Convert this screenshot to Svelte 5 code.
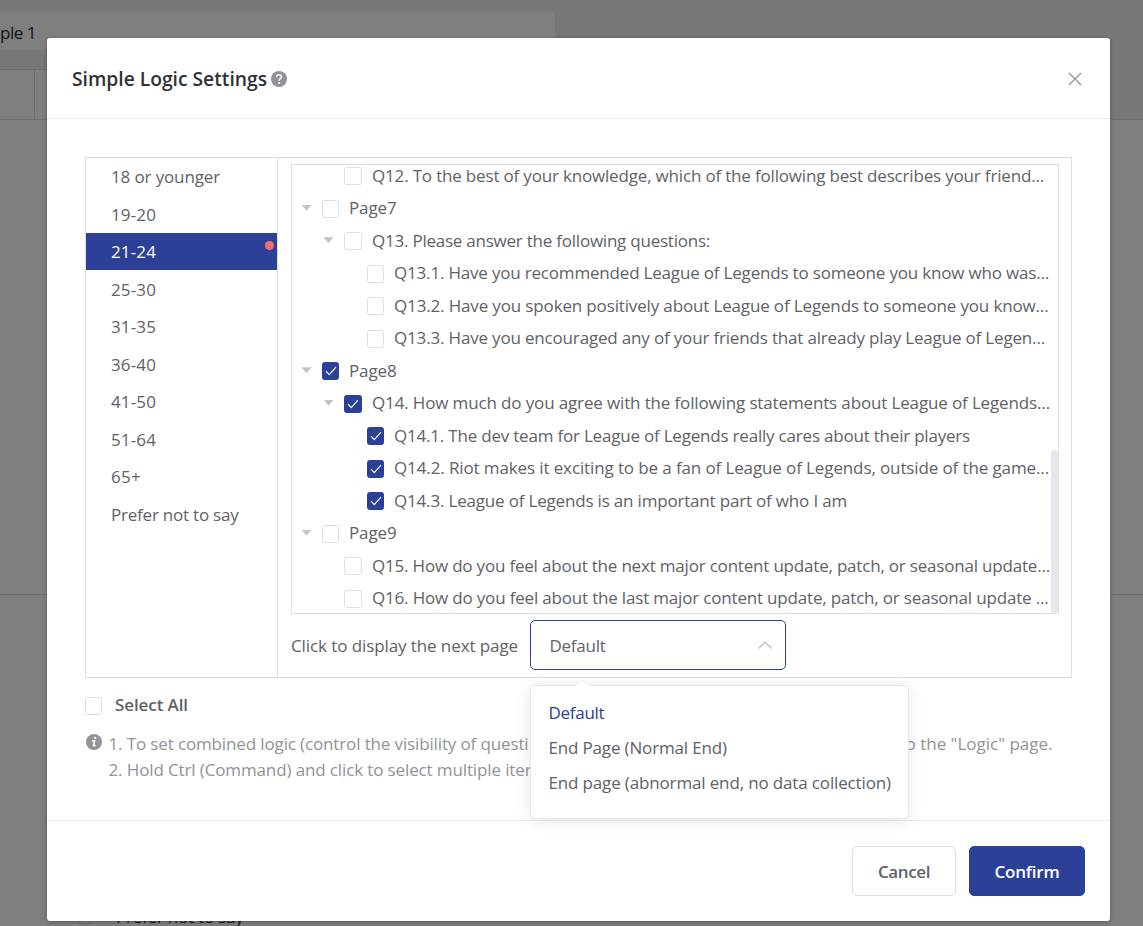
<script>
  const ages = [
    ['18 or younger', 109], ['19-20', 45], ['21-24', 45], ['25-30', 45], ['31-35', 45],
    ['36-40', 45], ['41-50', 45], ['51-64', 45], ['65+', 30], ['Prefer not to say', 127.5]
  ];
  const active = '21-24';

  const rows = [
    { level: 1, text: 'Q12. To the best of your knowledge, which of the following best describes your friend...', w: 672 },
    { level: 0, open: true, text: 'Page7', w: 47.5 },
    { level: 1, open: true, text: 'Q13. Please answer the following questions:', w: 338 },
    { level: 2, text: 'Q13.1. Have you recommended League of Legends to someone you know who was...', w: 655 },
    { level: 2, text: 'Q13.2. Have you spoken positively about League of Legends to someone you know...', w: 654.5 },
    { level: 2, text: 'Q13.3. Have you encouraged any of your friends that already play League of Legen...', w: 651 },
    { level: 0, open: true, checked: true, text: 'Page8', w: 47.5 },
    { level: 1, open: true, checked: true, text: 'Q14. How much do you agree with the following statements about League of Legends...', w: 678 },
    { level: 2, checked: true, text: 'Q14.1. The dev team for League of Legends really cares about their players', w: 576 },
    { level: 2, checked: true, text: 'Q14.2. Riot makes it exciting to be a fan of League of Legends, outside of the game...', w: 655 },
    { level: 2, checked: true, text: 'Q14.3. League of Legends is an important part of who I am', w: 453 },
    { level: 0, open: true, text: 'Page9', w: 47.5 },
    { level: 1, text: 'Q15. How do you feel about the next major content update, patch, or seasonal update...', w: 678 },
    { level: 1, text: 'Q16. How do you feel about the last major content update, patch, or seasonal update ...', w: 676.5 }
  ];

  const options = [['Default', 56], ['End Page (Normal End)', 178.5], ['End page (abnormal end, no data collection)', 342.5]];

  // Tracks a label so that it fills the given width.
  function fit(node, width) {
    const natural = node.getBoundingClientRect().width;
    node.style.letterSpacing = (width - natural) / node.textContent.length + 'px';
  }
</script>

{#snippet box(checked)}
  <span class="check" class:on={checked}>
    {#if checked}
      <svg viewBox="0 0 18 18" width="18" height="18"><path d="M4 9.2 7.3 12.6 14 5.2" fill="none" stroke="#fff" stroke-width="1.2" /></svg>
    {/if}
  </span>
{/snippet}

<div class="page">
  <div class="strip"><div class="tab"><span use:fit={36}>ple 1</span></div></div>
  <div class="toolbar"><i></i></div>
  <div class="section"></div>
  <div class="rest"><div class="radio-row"><i></i><span use:fit={127.5}>Prefer not to say</span></div></div>
</div>

<div class="modal">
  <header>
    <h1><span use:fit={195}>Simple Logic Settings</span></h1>
    <svg class="help" viewBox="0 0 16 16" width="16" height="16">
      <circle cx="8" cy="8" r="8" fill="#909399" />
      <path d="M5.6 6.2C5.6 4.6 6.6 3.8 8 3.8s2.4.9 2.4 2.1C10.4 7.5 8 7.7 8 9.7" fill="none" stroke="#fff" stroke-width="1.5" />
      <circle cx="8" cy="12" r="1" fill="#fff" />
    </svg>
    <svg class="close" viewBox="0 0 14 14" width="14" height="14"><path d="M1 1 13 13M13 1 1 13" stroke="#909399" stroke-width="1.3" /></svg>
  </header>

  <main>
    <div class="panel">
      <ul class="ages">
        {#each ages as [label, w]}
          <li class:active={label === active}><span use:fit={w}>{label}</span>{#if label === active}<i></i>{/if}</li>
        {/each}
      </ul>
      <div class="right">
        <div class="tree">
          <div class="rows">
            {#each rows as r}
              <div class="row l{r.level}">
                <span class="caret">{#if r.open}<i></i>{/if}</span>
                {@render box(r.checked)}
                <span class="label" use:fit={r.w}>{r.text}</span>
              </div>
            {/each}
          </div>
          <div class="thumb"></div>
        </div>
        <div class="next">
          <span class="caption" use:fit={227}>Click to display the next page</span>
          <div class="select">
            <span use:fit={56}>Default</span>
            <svg viewBox="0 0 16 10" width="16" height="10"><path d="M1.5 8.5 8 2 14.5 8.5" fill="none" stroke="#c0c4cc" stroke-width="1.4" /></svg>
            <div class="menu">
              <svg class="arrow" viewBox="0 0 16 8" width="16" height="8"><path d="M0 8 8 1 16 8Z" fill="#fff" /><path d="M1 7 8 1 15 7" fill="none" stroke="#eef0f5" /></svg>
              {#each options as [label, w], i}
                <div class="option" class:picked={i === 0}><span use:fit={w}>{label}</span></div>
              {/each}
            </div>
          </div>
        </div>
      </div>
    </div>

    <div class="all">{@render box(false)}<b><span use:fit={73}>Select All</span></b></div>

    <div class="notes">
      <svg viewBox="0 0 16 16" width="16" height="16">
        <circle cx="8" cy="8" r="8" fill="#909399" />
        <circle cx="9.1" cy="4" r="1.25" fill="#fff" />
        <path d="M6 6.7H8.6L7.4 11.5Q7.4 12.3 9.6 11.2" fill="none" stroke="#fff" stroke-width="1.6" />
      </svg>
      <div class="lines">
        <p><span use:fit={420}>1. To set combined logic (control the visibility of questi</span><span use:fit={147}>o the "Logic" page.</span></p>
        <p><span use:fit={423}>2. Hold Ctrl (Command) and click to select multiple iter</span></p>
      </div>
    </div>
  </main>

  <footer>
    <button><span use:fit={52}>Cancel</span></button>
    <button class="primary"><span use:fit={65}>Confirm</span></button>
  </footer>
</div>

<style>
  :global(body) { overflow: hidden; }
  .page, .modal { font-family: 'Open Sans', 'Noto Sans', sans-serif; font-size: 17px; color: #606266; box-sizing: border-box; }
  .page *, .modal * { box-sizing: border-box; }
  span { white-space: pre; }
  .page { height: 926px; background: #7f7f7f; overflow: hidden; display: flex; flex-direction: column; }
  .strip { height: 69px; background: #777; padding-top: 12px; flex: none; }
  .tab { width: 555px; height: 38px; background: #7f7f7f; line-height: 41px; color: #101218; }
  .toolbar { height: 51px; flex: none; border-bottom: 1px solid #6d6e70; background: linear-gradient(90deg, #7f7f7f 1100px, #777 1100px); }
  .toolbar::before { content: ''; display: block; width: 1100px; height: 1px; background: #6d6e70; }
  .toolbar i { display: block; width: 35px; height: 49px; border-right: 1px solid #6d6e70; }
  .section { height: 475px; flex: none; border-bottom: 1px solid #6d6e70; }
  .rest { flex: 1; display: flex; align-items: flex-end; padding-left: 76px; }
  .radio-row { display: flex; align-items: center; gap: 22px; height: 24px; color: #101218; margin-bottom: -2px; }
  .radio-row i { width: 18px; height: 18px; border: 1px solid #6d6e70; border-radius: 50%; }
  .modal { position: absolute; left: 47px; top: 38px; width: 1063px; height: 883px; background: #fff; border-radius: 3px; box-shadow: 0 1px 4px rgba(0,0,0,.3); display: flex; flex-direction: column; }
  header { height: 81px; flex: none; border-bottom: 1px solid #e4e7ed; display: flex; align-items: center; padding: 2px 28px 0 25px; }
  h1 { margin: 0; font-size: 19.3px; font-weight: 600; color: #303133; line-height: 26px; }
  .help { margin-left: 3.5px; }
  .close { margin-left: auto; }
  main { flex: 1; padding: 38px 38px 0; min-height: 0; }
  .panel { height: 521px; width: 987px; border: 1px solid #dcdfe6; display: flex; }
  .ages { list-style: none; margin: 0; padding: 0; width: 192px; border-right: 1px solid #dcdfe6; flex: none; }
  .ages li { height: 37.5px; line-height: 38.5px; padding-left: 25px; position: relative; }
  .ages li.active { background: linear-gradient(#2c4097 37px, transparent 37px); color: #fff; }
  .ages i { position: absolute; right: 3.5px; top: 7.5px; width: 9px; height: 9px; border-radius: 50%; background: #f56c6c; }
  .right { flex: 1; padding: 6px 12px 0 13px; min-width: 0; }
  .tree { height: 450px; width: 768px; border: 1px solid #dcdfe6; overflow: hidden; position: relative; }
  .rows { margin-top: -5px; }
  .row { height: 32.5px; display: flex; align-items: center; padding-left: 8px; }
  .l1 { padding-left: 30px; }
  .l2 { padding-left: 53px; }
  .caret { width: 22px; flex: none; padding-left: 1.5px; }
  .caret i { display: block; width: 10px; height: 6px; margin-top: -2px; background: #c0c4cc; clip-path: polygon(0 0, 100% 0, 50% 100%); }
  .check { width: 17px; height: 18px; flex: none; border: 1px solid #dcdfe6; border-radius: 2.5px; background: #fff; display: block; }
  .l1 .check { width: 18px; }
  .check.on { background: #2c4097; border-color: #2c4097; }
  .check svg { display: block; margin: -1px; }
  .label { margin-left: 10px; line-height: 30px; margin-top: -1.5px; flex: none; }
  .thumb { position: absolute; right: 0; bottom: 0; width: 7px; height: 163px; border-radius: 4px; background: #e4e7ec; }
  .next { display: flex; align-items: center; gap: 12px; margin-top: 6px; height: 50px; }
  .caption { padding-top: 1px; }
  .select { position: relative; width: 256px; height: 50px; border: 1px solid #2c4097; border-radius: 5px; display: flex; align-items: center; justify-content: space-between; padding: 0 12px 0 18.5px; }
  .menu { position: absolute; z-index: 2; left: -1px; top: 64px; width: 379px; height: 134px; background: #fff; border: 1px solid #e4e7ed; border-radius: 4px; box-shadow: 0 2px 15px rgba(0,0,0,.1); padding-top: 9px; }
  .arrow { position: absolute; top: -7px; left: 43px; }
  .option { height: 35px; line-height: 36px; padding-left: 17.4px; }
  .picked { color: #2c4097; }
  .all { display: flex; align-items: center; height: 26px; margin-top: 14px; padding-top: 1px; }
  .all b { font-weight: 600; margin-left: 13px; margin-top: -2px; }
  .notes { display: flex; margin-top: 12px; color: #909399; }
  .notes > svg { margin: 3.5px 7px 0 .5px; }
  .lines { width: 944px; }
  p { margin: 0; height: 26.25px; line-height: 27px; display: flex; justify-content: space-between; }
  footer { height: 101px; flex: none; border-top: 1px solid #ebeef5; display: flex; justify-content: flex-end; gap: 13px; padding: 25px 25px 0; }
  button { width: 104px; height: 50px; padding: 0; border: 1px solid #dcdfe6; border-radius: 5px; background: #fff; font: 600 17px 'Open Sans', sans-serif; color: #606266; }
  .primary { width: 116px; background: #2c4097; border-color: #2c4097; color: #fff; }
</style>
